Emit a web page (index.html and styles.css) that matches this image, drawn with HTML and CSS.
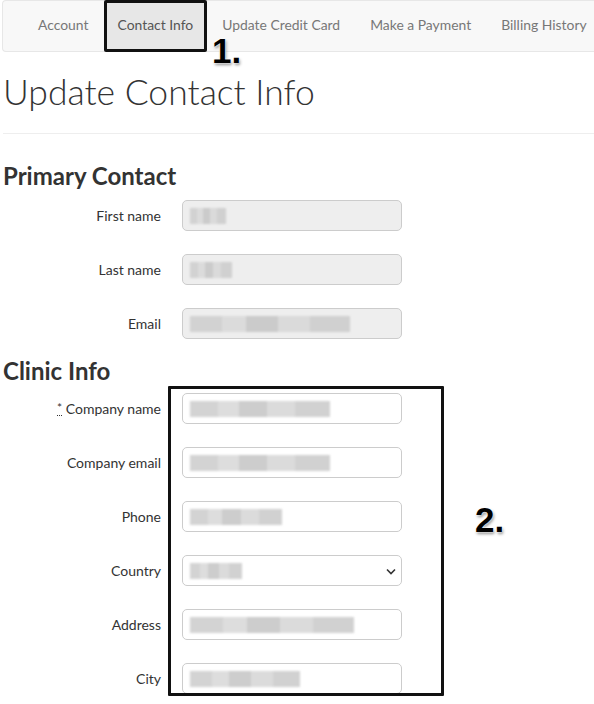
FILE: index.html
```html
<!DOCTYPE html>
<html>
<head>
<meta charset="utf-8">
<link rel="stylesheet" href="styles.css">
</head>
<body>
<nav class="tabs">
  <a class="tab">Account</a>
  <a class="tab active">Contact Info</a>
  <a class="tab">Update Credit Card</a>
  <a class="tab">Make a Payment</a>
  <a class="tab">Billing History</a>
  <span class="mark mark-1">1.</span>
</nav>
<main class="page">
  <h1 class="title">Update Contact Info</h1>
  <hr class="rule">
  <h3 class="section">Primary Contact</h3>
  <div class="form">
    <label class="lbl">First name</label>
    <div class="field disabled"><span class="blob" style="width:36px"></span></div>
    <label class="lbl">Last name</label>
    <div class="field disabled"><span class="blob" style="width:42px"></span></div>
    <label class="lbl">Email</label>
    <div class="field disabled"><span class="blob" style="width:160px"></span></div>
  </div>
  <h3 class="section section-2">Clinic Info</h3>
  <div class="clinic">
    <div class="form">
      <label class="lbl"><abbr class="req">*</abbr> Company name</label>
      <div class="field"><span class="blob" style="width:140px"></span></div>
      <label class="lbl">Company email</label>
      <div class="field"><span class="blob" style="width:140px"></span></div>
      <label class="lbl">Phone</label>
      <div class="field"><span class="blob" style="width:92px"></span></div>
      <label class="lbl">Country</label>
      <div class="field select"><span class="blob" style="width:52px"></span>
        <svg class="chev" width="10" height="7" viewBox="0 0 10 7"><path d="M1 1.5 L5 5.5 L9 1.5" fill="none" stroke="#333" stroke-width="1.6"/></svg>
      </div>
      <label class="lbl">Address</label>
      <div class="field"><span class="blob" style="width:164px"></span></div>
      <label class="lbl">City</label>
      <div class="field"><span class="blob" style="width:110px"></span></div>
    </div>
    <div class="annot-box"></div>
    <span class="mark mark-2">2.</span>
  </div>
</main>
</body>
</html>
```

FILE: styles.css
```css
html, body {
  margin: 0;
  padding: 0;
  background: #fff;
}
body {
  font-family: "Lato", "Liberation Sans", sans-serif;
  color: #333;
}
.tabs {
  position: relative;
  display: flex;
  align-items: stretch;
  height: 50px;
  margin: 0 0 0 2px;
  padding-left: 20px;
  background: #f8f8f8;
  border: 1px solid #e7e7e7;
  border-right: none;
  border-radius: 4px 0 0 4px;
  overflow: visible;
}
.tab {
  display: flex;
  align-items: center;
  padding: 0 15px 3px;
  font-size: 13.9px;
  color: #777;
  white-space: nowrap;
}
.tab.active {
  background: #e7e7e7;
  color: #555;
  box-shadow: 0 0 0 3px #111 inset;
  border-radius: 2px;
  margin-top: -1px;
  margin-bottom: -1px;
  padding-left: 14px;
  padding-right: 14px;
}
.mark {
  position: absolute;
  font-family: "Liberation Sans", Arial, sans-serif;
  font-weight: 700;
  font-size: 35px;
  line-height: 35px;
  color: #000;
  text-shadow: 0 0 2px #fff, 0 0 2px #fff, 1px 2px 3px rgba(0,0,0,0.45);
}
.mark-1 { left: 209px; top: 32px; }
.page {
  padding: 0 0 20px 3px;
}
.title {
  margin: 20px 0 0;
  font-size: 35.5px;
  line-height: 40px;
  font-weight: 300;
  color: #333;
}
.rule {
  margin: 21px 0 0;
  border: 0;
  border-top: 1px solid #eee;
}
.section {
  margin: 29px 0 0;
  font-size: 24px;
  line-height: 26px;
  font-weight: 700;
  color: #333;
}
.section-2 {
  margin-top: 19px;
}
.form {
  display: grid;
  grid-template-columns: 158px 220px;
  column-gap: 21px;
  row-gap: 23px;
  margin-top: 11px;
  align-items: center;
}
.section-2 + .clinic .form {
  margin-top: 9px;
}
.lbl {
  text-align: right;
  font-size: 14px;
  color: #333;
  white-space: nowrap;
}
.req {
  text-decoration: none;
  border-bottom: 1px dotted #333;
  font-size: 12px;
  vertical-align: 2px;
}
.field {
  position: relative;
  height: 29px;
  border: 1px solid #ccc;
  border-radius: 5px;
  background: #fff;
  display: flex;
  align-items: center;
  padding-left: 7px;
}
.field.disabled {
  background: #eee;
}
.blob {
  display: block;
  height: 16px;
  background: linear-gradient(90deg, #cfcfcf 0 20%, #dadada 20% 35%, #c8c8c8 35% 55%, #d8d8d8 55% 75%, #cdcdcd 75% 100%);
  filter: blur(1.2px);
  opacity: 0.9;
}
.chev {
  position: absolute;
  right: 5px;
  top: 12px;
}
.clinic {
  position: relative;
}
.annot-box {
  position: absolute;
  left: 165px;
  top: -7px;
  width: 270px;
  height: 304px;
  border: 3px solid #111;
  border-radius: 1px;
}
.mark-2 { left: 472px; top: 109px; }
```
